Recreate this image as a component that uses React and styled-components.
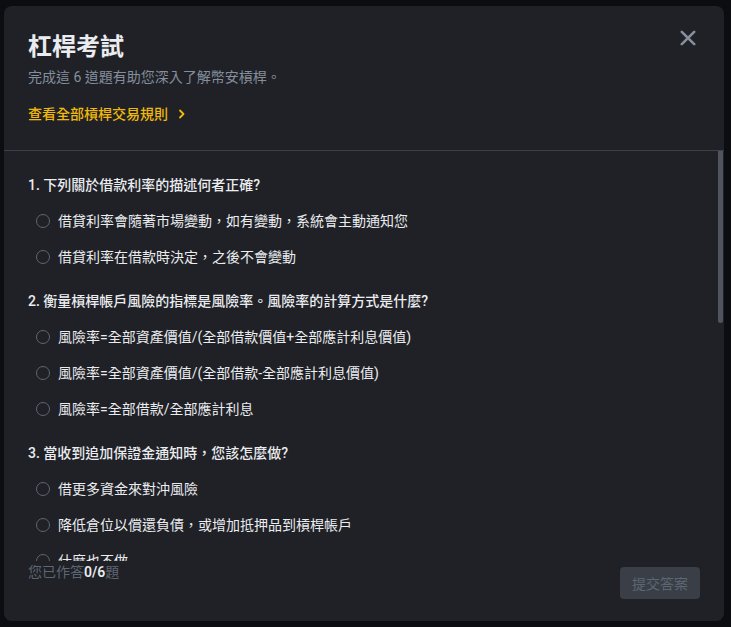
import React from "react";
import styled, { createGlobalStyle } from "styled-components";

const GlobalStyle = createGlobalStyle`
  html, body {
    margin: 0;
    padding: 0;
    background: #0b0d10;
  }
  body {
    font-family: Roboto, "Noto Sans CJK TC", "Noto Sans", sans-serif;
    -webkit-font-smoothing: antialiased;
  }
`;

const QUESTIONS = [
  {
    title: "下列關於借款利率的描述何者正確?",
    options: [
      "借貸利率會隨著市場變動，如有變動，系統會主動通知您",
      "借貸利率在借款時決定，之後不會變動",
    ],
  },
  {
    title: "衡量槓桿帳戶風險的指標是風險率。風險率的計算方式是什麼?",
    options: [
      "風險率=全部資產價值/(全部借款價值+全部應計利息價值)",
      "風險率=全部資產價值/(全部借款-全部應計利息價值)",
      "風險率=全部借款/全部應計利息",
    ],
  },
  {
    title: "當收到追加保證金通知時，您該怎麼做?",
    options: [
      "借更多資金來對沖風險",
      "降低倉位以償還負債，或增加抵押品到槓桿帳戶",
      "什麼也不做",
    ],
  },
  {
    title: "當風險率下降至強制平倉線時，會發生什麼?",
    options: [
      "系統將強制平倉您的倉位以償還負債",
      "系統將自動為您增加抵押品",
      "沒有任何影響",
    ],
  },
  {
    title: "以下哪項關於槓桿交易的說法是正確的?",
    options: [
      "槓桿可以放大收益，也會放大虧損",
      "槓桿交易沒有任何風險",
    ],
  },
  {
    title: "借款利息是如何計算的?",
    options: ["按小時計算利息", "按月計算利息", "只在還款時收取一次"],
  },
];

const CloseIcon = () => (
  <svg width="16" height="16" viewBox="0 0 16 16" fill="none">
    <path
      d="M1.8 1.8L14.2 14.2M14.2 1.8L1.8 14.2"
      stroke="currentColor"
      strokeWidth="2.6"
      strokeLinecap="round"
    />
  </svg>
);

const Chevron = () => (
  <svg width="8" height="10" viewBox="0 0 8 10" fill="none">
    <path
      d="M2 1.5L5.5 5L2 8.5"
      stroke="currentColor"
      strokeWidth="1.8"
      strokeLinecap="round"
      strokeLinejoin="round"
    />
  </svg>
);

const App = () => {
  return (
    <>
      <GlobalStyle />
      <Page>
        <Modal>
          <Header>
            <HeaderText>
              <Title>杠桿考試</Title>
              <Subtitle>完成這 6 道題有助您深入了解幣安槓桿。</Subtitle>
              <RulesLink href="#">
                查看全部槓桿交易規則
                <Chevron />
              </RulesLink>
            </HeaderText>
            <CloseButton aria-label="close">
              <CloseIcon />
            </CloseButton>
          </Header>

          <BodyWrap>
            <QuizBody>
              {QUESTIONS.map((q, qi) => (
                <QuestionBlock key={qi}>
                  <QuestionTitle>
                    {qi + 1}. {q.title}
                  </QuestionTitle>
                  {q.options.map((opt, oi) => (
                    <OptionRow key={oi}>
                      <Radio />
                      <OptionText>{opt}</OptionText>
                    </OptionRow>
                  ))}
                </QuestionBlock>
              ))}
            </QuizBody>
            <ScrollThumb />
          </BodyWrap>

          <Footer>
            <Progress>
              您已作答<strong>0/6</strong>題
            </Progress>
            <SubmitButton disabled>提交答案</SubmitButton>
          </Footer>
        </Modal>
      </Page>
    </>
  );
};

const Page = styled.div`
  width: 731px;
  height: 627px;
  box-sizing: border-box;
  padding: 6px 7px 6px 4px;
  overflow: hidden;
`;

const Modal = styled.div`
  width: 720px;
  height: 615px;
  background: #1f2126;
  border-radius: 8px;
  display: flex;
  flex-direction: column;
  overflow: hidden;
`;

const Header = styled.div`
  display: flex;
  justify-content: space-between;
  align-items: flex-start;
  padding: 25px 28px 26px 24px;
  border-bottom: 1px solid #3d4149;
`;

const HeaderText = styled.div`
  display: flex;
  flex-direction: column;
`;

const Title = styled.h1`
  margin: 0;
  font-size: 24px;
  line-height: 32px;
  font-weight: 700;
  color: #eaecef;
`;

const Subtitle = styled.p`
  margin: 4px 0 0;
  font-size: 14px;
  line-height: 20px;
  color: #848e9c;
`;

const RulesLink = styled.a`
  margin-top: 17px;
  display: inline-flex;
  align-items: center;
  gap: 10px;
  font-size: 14px;
  line-height: 20px;
  font-weight: 500;
  color: #f0b90b;
  text-decoration: none;
`;

const CloseButton = styled.button`
  margin-top: -1px;
  padding: 0;
  border: none;
  background: transparent;
  color: #848e9c;
  display: flex;
  cursor: pointer;
`;

const BodyWrap = styled.div`
  position: relative;
  flex: 1;
  min-height: 0;
  display: flex;
`;

const QuizBody = styled.div`
  flex: 1;
  overflow-y: auto;
  padding: 24px;
  display: flex;
  flex-direction: column;
  gap: 24px;
  scrollbar-width: none;

  &::-webkit-scrollbar {
    display: none;
  }
`;

const ScrollThumb = styled.div`
  position: absolute;
  top: 0;
  right: 1px;
  width: 5px;
  height: 172px;
  border-radius: 0 0 3px 3px;
  background: #4f545e;
`;

const QuestionBlock = styled.div`
  display: flex;
  flex-direction: column;
  gap: 16px;
  flex-shrink: 0;
`;

const QuestionTitle = styled.div`
  font-size: 14px;
  line-height: 20px;
  font-weight: 500;
  color: #eaecef;
`;

const OptionRow = styled.label`
  display: flex;
  align-items: center;
  gap: 8px;
  padding-left: 8px;
  cursor: pointer;
`;

const Radio = styled.span`
  width: 14px;
  height: 14px;
  box-sizing: border-box;
  border-radius: 50%;
  border: 1px solid #5e6673;
  flex-shrink: 0;
`;

const OptionText = styled.span`
  font-size: 14px;
  line-height: 20px;
  color: #eaecef;
`;

const Footer = styled.div`
  display: flex;
  justify-content: space-between;
  align-items: flex-start;
  padding: 0 24px 22px;
  background: #1f2126;
`;

const Progress = styled.div`
  font-size: 14px;
  line-height: 22px;
  color: #5e6673;

  strong {
    color: #eaecef;
    font-weight: 600;
  }
`;

const SubmitButton = styled.button`
  margin-top: 6px;
  width: 80px;
  height: 32px;
  border: none;
  border-radius: 4px;
  background: #3a3e46;
  color: #5e6673;
  font-family: inherit;
  font-size: 14px;
  padding: 0;
`;

export default App;
